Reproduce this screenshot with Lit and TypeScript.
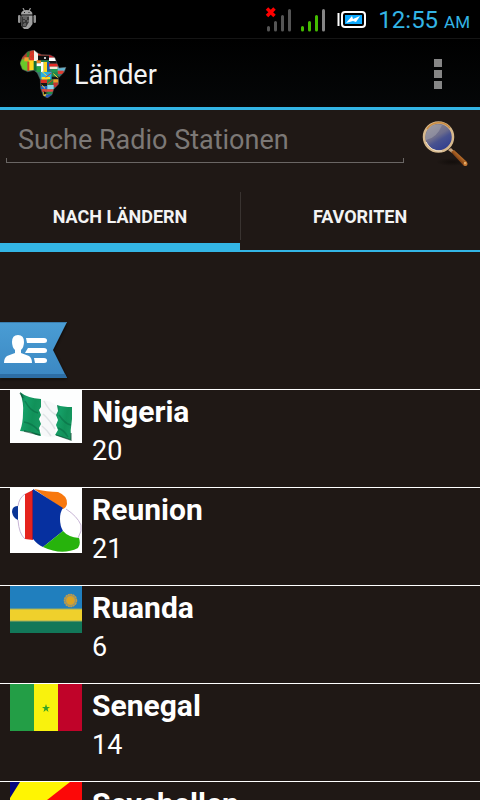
import { LitElement, html, css, svg, TemplateResult } from "lit";
import { customElement, property, state } from "lit/decorators.js";
import { classMap } from "lit/directives/class-map.js";

interface Country {
  name: string;
  stations: number;
  flag: TemplateResult;
}

const nigeria = html`<svg width="72" height="53" viewBox="0 0 72 53" aria-hidden="true">
  <defs>
    <linearGradient id="ng" x1="0" x2="1" y1="0" y2="0.4">
      <stop offset="0" stop-color="#0b7048" /><stop offset=".3" stop-color="#16a068" />
      <stop offset=".7" stop-color="#119159" /><stop offset="1" stop-color="#15965f" />
    </linearGradient>
  </defs>
  <rect width="72" height="53" fill="#fdfefe" />
  <path d="M31 10Q40 10 47 16L45 47Q37 48 31 44Z" fill="#f7f8f9" />
  <path d="M34 11Q39 21 46 25M33 24Q39 29 45 39M32 36Q37 40 41 46" fill="none" stroke="#dfe3e5" stroke-width="1.500" />
  <path d="M10 2Q17 8 31 9L31 17L29 20L31 25L29 29L31 34L29 38L31 46Q25 45 20 42L10 41Q13 33 13 23Q14 13 10 2Z" fill="url(#ng)" />
  <path d="M47 15Q53 17 62 17L62 29Q60 40 61 50L45 45L48 40L46 35L48 30L46 25L48 21Z" fill="url(#ng)" />
  <path d="M15 11Q20 21 28 23M14 32Q22 33 29 41M49 25Q55 34 61 35M48 38Q54 40 58 47" fill="none" stroke="#08633f" stroke-width="1.500" opacity=".5" />
  <path d="M10 3L13 8M46 45L61 50V43M14 41L30 45" fill="none" stroke="#07452d" stroke-width="1.300" opacity=".65" />
</svg>`;

const reunion = html`<svg width="72" height="65" viewBox="0 0 72 65" aria-hidden="true">
  <rect width="72" height="65" fill="#fff" />
  <path d="M8 18Q2 18 2 24Q3 30 8 32Z" fill="#0a3596" />
  <path d="M24 1Q38 4 48 4Q58 8 57 16Q56 20 53 21Z" fill="#f8780e" />
  <path d="M23 1L53 20Q50 24 50 31Q50 38 53 43L33 59Q28 57 23 51Z" fill="#0630a0" />
  <path d="M15 6L23 2V52L15 51Z" fill="#e5231d" />
  <path d="M22.500 2V51" stroke="#8c1c45" />
  <path d="M33 59L53 43Q58 49 69 50Q71 56 68 60Q52 68 33 59Z" fill="#27b30c" />
  <path d="M15 6Q9 10 8 18M8 32Q9 46 15 51M56 21Q67 28 71 37V43L68 50" fill="none" stroke="#c7b4d5" />
</svg>`;

const rwanda = html`<svg width="72" height="47" viewBox="0 0 72 47" aria-hidden="true">
  <rect width="72" height="23" fill="#207fbe" />
  <rect y="23" width="72" height="12" fill="#efd02c" />
  <rect y="35" width="72" height="12" fill="#127759" />
  <path d="M0 23H72M0 35H72" stroke="#9dae65" />
  <circle cx="60.500" cy="14.500" r="6.500" fill="#8c9472" />
  <circle cx="60.500" cy="14.500" r="6" fill="none" stroke="#c09a48" stroke-width="1.500" stroke-dasharray="1.700 .8" />
  <circle cx="60.500" cy="14.500" r="4.500" fill="#cfa03a" />
  <circle cx="60.500" cy="14.500" r="3.500" fill="#dda421" />
</svg>`;

const senegal = html`<svg width="72" height="47" viewBox="0 0 72 47" aria-hidden="true">
  <rect width="24" height="47" fill="#239e46" />
  <rect x="24" width="24" height="47" fill="#f9f20d" />
  <rect x="48" width="24" height="47" fill="#c00329" />
  <path d="M36 20L37 23H40L37.600 24.800L38.500 28L36 26L33.500 28L34.400 24.800L32 23H35Z" fill="#36a126" />
</svg>`;

const seychelles = html`<svg width="72" height="47" viewBox="0 0 72 47" aria-hidden="true">
  <rect width="72" height="47" fill="#fc0808" />
  <path d="M0 47V0H60Z" fill="#fff502" />
  <path d="M0 0H10L0 16Z" fill="#06077d" />
</svg>`;

const countries: Country[] = [
  { name: "Nigeria", stations: 20, flag: nigeria },
  { name: "Reunion", stations: 21, flag: reunion },
  { name: "Ruanda", stations: 6, flag: rwanda },
  { name: "Senegal", stations: 14, flag: senegal },
  { name: "Seychellen", stations: 8, flag: seychelles },
];

const tile = (x: number, y: number, w: number, h: number, fill: string) =>
  svg`<rect x=${x} y=${y} width=${w} height=${h} fill=${fill} />`;

@customElement("status-bar")
class StatusBar extends LitElement {
  static styles = css`
    :host {
      display: flex;
      justify-content: space-between;
      align-items: center;
      height: 38px;
      padding: 0 10px 0 17px;
      background: #000;
      color: #33b5e5;
    }
    svg { display: block; }
    .indicators { display: flex; align-items: center; gap: 12px; }
    .clock { font-size: 24px; line-height: 36px; padding-top: 4px; white-space: nowrap; }
    .meridiem { font-size: 17px; }
  `;
  render() {
    return html`
      <svg width="20" height="22" viewBox="0 0 20 22" aria-hidden="true">
        <path d="M6 0L7.500 3M13.500 0L12 3" stroke="#999" stroke-width="1.200" />
        <path d="M4 6.500Q4 2 9.700 2T15.500 6.500Z" fill="#a3a3a3" />
        <path d="M7 4.500H8M11.500 4.500H12.500" stroke="#222" />
        <rect x="1" y="7" width="2.500" height="8" rx="1.200" fill="#929292" />
        <rect x="16.500" y="7" width="2.500" height="8" rx="1.200" fill="#929292" />
        <path d="M4.500 7.500H15.500V16Q14 19 11 21H7L4.500 18Z" fill="#a0a0a0" />
        <path d="M5 8.500H12V14L9 19H5Z" fill="#383838" />
        <path d="M6 10H8M9 9V12M6 13H8M8 15V18M10 13H12M6 17H7" stroke="#8a8a8a" />
      </svg>
      <div class="indicators">
        <svg width="101" height="26" viewBox="265 5 101 26" role="img" aria-label="Signal und Akku">
          <g stroke-width="3" stroke-linecap="round">
            <path d="M268.500 26.500V29M275.500 21.500V29M282.500 15.500V29M289.500 9.500V29" stroke="#555" />
            <path d="M302.500 26.500V29M309.500 21.500V29M316.500 15.500V29" stroke="#44bd00" />
            <path d="M323.500 9.500V29" stroke="#858585" />
          </g>
          <path d="M267 7.500L274.500 15M274.500 7.500L267 15" stroke="#f00" stroke-width="3.500" />
          <path d="M338.500 12V25" stroke="#fff" stroke-width="2" />
          <rect x="342" y="11" width="23" height="15" rx="3" fill="#000" stroke="#fff" stroke-width="2" />
          <rect x="345" y="14" width="17" height="9" fill="#0caaff" />
          <path d="M346 22L352 15L353 18L360 15L356 21L353 20Z" fill="#fff" />
        </svg>
        <time class="clock">12:55 <span class="meridiem">AM</span></time>
      </div>
    `;
  }
}

@customElement("action-bar")
class ActionBar extends LitElement {
  static styles = css`
    :host {
      display: flex;
      align-items: center;
      box-sizing: border-box;
      height: 72px;
      padding: 2px 22px 0 20px;
      border-top: 1px solid #151515;
      border-bottom: 3px solid #33b5e5;
      background: linear-gradient(#000, #050708);
    }
    svg { display: block; }
    h1 { flex: 1; margin: 0 0 0 6px; padding-top: 2px; color: #f3f3f3; font-size: 27px; line-height: 36px; font-weight: 400; }
    .menu {
      display: flex;
      flex-direction: column;
      align-items: center;
      gap: 3px;
      width: 40px;
      padding: 0;
      border: 0;
      background: none;
    }
    .dot { width: 8px; height: 8px; background: #868686; }
  `;
  render() {
    return html`
      <svg width="48" height="48" viewBox="15 15 144 144" aria-hidden="true">
        <defs>
          <clipPath id="land">
            <path d="M15 55L23 36L38 20L57 15L69 25L80 29L105 30L119 37L126 55L132 69L153 67L147 82L130 99L131 117L116 133L111 149L97 159L85 152L77 130L76 104L67 84L57 76L38 80L22 73Z" />
          </clipPath>
          <filter id="soft"><feGaussianBlur stdDeviation="1.200" /></filter>
        </defs>
        <g clip-path="url(#land)"><g filter="url(#soft)">
          ${tile(10, 10, 150, 150, "#377c6f")}
          ${tile(12, 30, 14, 18, "#e84a2b")}${tile(24, 20, 18, 18, "#bd3829")}
          ${tile(35, 14, 14, 22, "#35832f")}${tile(44, 14, 14, 35, "#cb3826")}
          ${tile(57, 14, 12, 35, "#f4f0e8")}${tile(14, 43, 30, 34, "#69c82c")}
          ${tile(28, 37, 13, 12, "#f3a229")}${tile(41, 46, 16, 30, "#ffd51b")}
          ${tile(37, 50, 6, 28, "#d0432c")}${tile(56, 48, 9, 30, "#176e38")}
          ${tile(65, 45, 13, 10, "#ef8b2b")}${tile(65, 55, 13, 9, "#fff")}${tile(65, 64, 15, 17, "#25a545")}
          ${tile(69, 23, 34, 9, "#e42c20")}${tile(69, 32, 34, 14, "#111")}${tile(78, 46, 25, 6, "#207f44")}
          ${tile(102, 28, 24, 10, "#cf1e25")}${tile(102, 38, 25, 10, "#fff")}${tile(102, 48, 26, 8, "#151515")}
          ${tile(78, 51, 8, 30, "#fff")}${tile(86, 51, 10, 30, "#ffd51d")}${tile(96, 51, 9, 26, "#2257a5")}
          ${tile(102, 56, 27, 9, "#e52b25")}${tile(104, 65, 24, 7, "#f5e8d6")}${tile(110, 72, 20, 10, "#249952")}
          ${tile(128, 65, 25, 14, "#63b5d0")}${tile(128, 77, 18, 10, "#dd3c32")}
          ${tile(77, 81, 33, 22, "#29aee3")}${tile(80, 96, 25, 8, "#ffdb27")}${tile(110, 82, 18, 13, "#208746")}
          ${tile(110, 95, 22, 8, "#151515")}${tile(76, 104, 20, 10, "#d82d21")}${tile(76, 114, 20, 9, "#151515")}
          ${tile(97, 103, 18, 16, "#28853c")}${tile(115, 103, 16, 10, "#ed9c26")}${tile(115, 113, 14, 13, "#c43431")}
          ${tile(77, 123, 20, 9, "#2360bd")}${tile(97, 120, 19, 13, "#8ad3eb")}${tile(80, 132, 14, 9, "#d7443c")}
          ${tile(94, 133, 22, 7, "#e6463c")}${tile(84, 141, 15, 12, "#f4d336")}${tile(94, 141, 22, 7, "#258d49")}
          ${tile(92, 148, 20, 12, "#2859b4")}
          <path d="M57 28A8 8 0 1 0 57 41" fill="none" stroke="#ef3427" stroke-width="3" />
          <path d="M81 80L95 92M115 86L128 98M80 120L90 130" stroke="#ffdb39" stroke-width="3" />
          <path d="M92 97L109 84M98 116L113 105" stroke="#d9382d" stroke-width="3" />
          <path d="M86 149L98 144L86 139Z" fill="#111" />
          <circle cx="90" cy="39" r="3" fill="#fff" />
        </g></g>
        <path d="M15 55L23 36L38 20L57 15L69 25L80 29L105 30L119 37L126 55L132 69L153 67L147 82L130 99L131 117L116 133L111 149L97 159L85 152L77 130L76 104L67 84L57 76L38 80L22 73Z" fill="none" stroke="#606060" stroke-width="3" stroke-opacity=".5" />
      </svg>
      <h1>Länder</h1>
      <button class="menu" aria-label="Weitere Optionen">
        <span class="dot"></span><span class="dot"></span><span class="dot"></span>
      </button>
    `;
  }
}

@customElement("station-search")
class StationSearch extends LitElement {
  static styles = css`
    :host { display: flex; height: 70px; box-sizing: border-box; padding: 0 10px 0 6px; }
    .field { position: relative; flex: 1; height: 53px; }
    input {
      box-sizing: border-box;
      width: 100%;
      height: 53px;
      padding: 8px 12px 0;
      border: 0;
      border-bottom: 1px solid #6a6664;
      outline: 0;
      background: none;
      color: #f3f3f3;
      font: 27px/36px Roboto, "Liberation Sans", sans-serif;
    }
    input::placeholder { color: #7c7876; opacity: 1; }
    .field::after {
      content: "";
      position: absolute;
      left: 0;
      right: 0;
      bottom: 0;
      height: 5px;
      border: 1px solid #6a6664;
      border-width: 0 1px;
      pointer-events: none;
    }
    button { width: 48px; height: 48px; margin: 10px 0 0 18px; padding: 0; border: 0; background: none; }
    svg { display: block; }
  `;
  render() {
    return html`
      <div class="field">
        <input type="text" placeholder="Suche Radio Stationen" aria-label="Suche Radio Stationen" />
      </div>
      <button aria-label="Suchen">
        <svg width="48" height="48" viewBox="0 0 48 48" aria-hidden="true">
          <defs>
            <linearGradient id="glass" x1=".2" y1="0" x2=".8" y2="1">
              <stop offset="0" stop-color="#8e8b96" /><stop offset=".45" stop-color="#6d6d8c" />
              <stop offset=".6" stop-color="#48528f" /><stop offset="1" stop-color="#2c3a90" />
            </linearGradient>
            <linearGradient id="handle" x1="1" y1="0" x2="0" y2="1">
              <stop offset=".35" stop-color="#c47830" /><stop offset=".55" stop-color="#8a4817" /><stop offset="1" stop-color="#4c230c" />
            </linearGradient>
            <radialGradient id="shade"><stop offset="0" stop-color="#0b0705" stop-opacity=".6" /><stop offset="1" stop-color="#0b0705" stop-opacity="0" /></radialGradient>
          </defs>
          <ellipse cx="30" cy="42" rx="16" ry="4" fill="url(#shade)" />
          <path d="M26 30L29 28L32 31L30 33Z" fill="#c3a27e" />
          <path d="M29 32L32 30L45 42Q46 46 42 46Z" fill="url(#handle)" />
          <circle cx="43.500" cy="44" r="2" fill="#c77c38" />
          <circle cx="43" cy="43" r="1" fill="#edbb78" />
          <circle cx="16.500" cy="17" r="14.500" fill="url(#glass)" stroke="#d7b98d" stroke-width="2.500" />
          <path d="M5 9A14.500 14.500 0 0 1 28 8" fill="none" stroke="#c98b42" stroke-width="1.500" />
          <path d="M4 20Q15 18 20 5Q12 3 7 8Q3 13 4 20Z" fill="#b5b4b7" opacity=".4" />
          <path d="M4 22Q9 32 20 31" fill="none" stroke="#f0e2cf" />
        </svg>
      </button>
    `;
  }
}

@customElement("country-row")
class CountryRow extends LitElement {
  @property({ attribute: false }) country!: Country;
  static styles = css`
    :host {
      display: flex;
      align-items: flex-start;
      gap: 10px;
      box-sizing: border-box;
      height: 98px;
      padding: 0 10px;
      border-top: 1px solid #fff;
      color: #fff;
    }
    svg { display: block; }
    .label { display: flex; flex-direction: column; padding-top: 2px; }
    .name { font-size: 30px; line-height: 40px; font-weight: 700; }
    .count { font-size: 27px; line-height: 38px; }
  `;
  render() {
    return html`
      ${this.country.flag}
      <div class="label">
        <span class="name">${this.country.name}</span>
        <span class="count">${this.country.stations}</span>
      </div>
    `;
  }
}

@customElement("app-root")
class AppRoot extends LitElement {
  @state() private tab = 0;
  static styles = css`
    :host {
      display: flex;
      flex-direction: column;
      height: 100vh;
      overflow: hidden;
      background: #1f1815;
      font-family: Roboto, "Liberation Sans", sans-serif;
    }
    status-bar, action-bar, station-search, .tabs { flex: none; }
    .tabs { display: flex; height: 72px; }
    .tab {
      flex: 1;
      box-sizing: border-box;
      padding: 4px 0 0;
      border: 0;
      border-bottom: 2px solid #33b5e5;
      background: none;
      color: #f3f3f3;
      font: 700 18px/24px Roboto, "Liberation Sans", sans-serif;
    }
    .selected { padding-top: 11px; border-bottom-width: 9px; }
    .tab + .tab { background: linear-gradient(#393330, #393330) 0 12px / 1px 48px no-repeat; }
    .content { flex: 1; min-height: 0; overflow: hidden; }
    .handle { display: block; margin: 68px 0 7px; padding: 0; border: 0; background: none; }
    .handle svg { display: block; }
    ul { margin: 0; padding: 0; list-style: none; }
  `;
  private renderTab(index: number, label: string) {
    return html`<button
      role="tab"
      aria-selected=${this.tab === index ? "true" : "false"}
      class=${classMap({ tab: true, selected: this.tab === index })}
      @click=${() => (this.tab = index)}
    >${label}</button>`;
  }
  render() {
    return html`
      <status-bar></status-bar>
      <action-bar></action-bar>
      <station-search></station-search>
      <div class="tabs" role="tablist">
        ${this.renderTab(0, "NACH LÄNDERN")}
        ${this.renderTab(1, "FAVORITEN")}
      </div>
      <main class="content">
        <button class="handle" aria-label="Kontakte">
          <svg width="70" height="62" viewBox="0 0 70 62" aria-hidden="true">
            <defs>
              <linearGradient id="ribbon" x2="0" y2="1"><stop offset="0" stop-color="#4a9dd4" /><stop offset="1" stop-color="#3b87c2" /></linearGradient>
              <filter id="drop" x="-10%" y="-10%" width="120%" height="125%"><feGaussianBlur stdDeviation="1.500" /></filter>
            </defs>
            <path d="M0 4H67L53 31L67 59H0Z" fill="#090706" opacity=".7" filter="url(#drop)" />
            <path d="M0 2H67L53 30L67 58H0Z" fill="url(#ribbon)" />
            <path d="M0 54H65L67 58H0Z" fill="#2d6ea5" />
            <path d="M0 2.500H66" stroke="#397eaf" />
            <g fill="#fff">
              <path d="M12 22Q12 15 18 15T24 22Q24 27 21 30V33L29 36Q32 38 32 43H4Q4 38 7 36L15 33V30Q12 27 12 22Z" />
              <path d="M26 18H44Q47 18 47 20.500T44 23H27Z" />
              <path d="M28 28H44Q47 28 47 30.500T44 33H25Q26 31 28 28Z" />
              <path d="M34 38H44Q47 38 47 40.500T44 43H35Z" />
            </g>
          </svg>
        </button>
        <ul>
          ${countries.map((c) => html`<li><country-row .country=${c}></country-row></li>`)}
        </ul>
      </main>
    `;
  }
}
